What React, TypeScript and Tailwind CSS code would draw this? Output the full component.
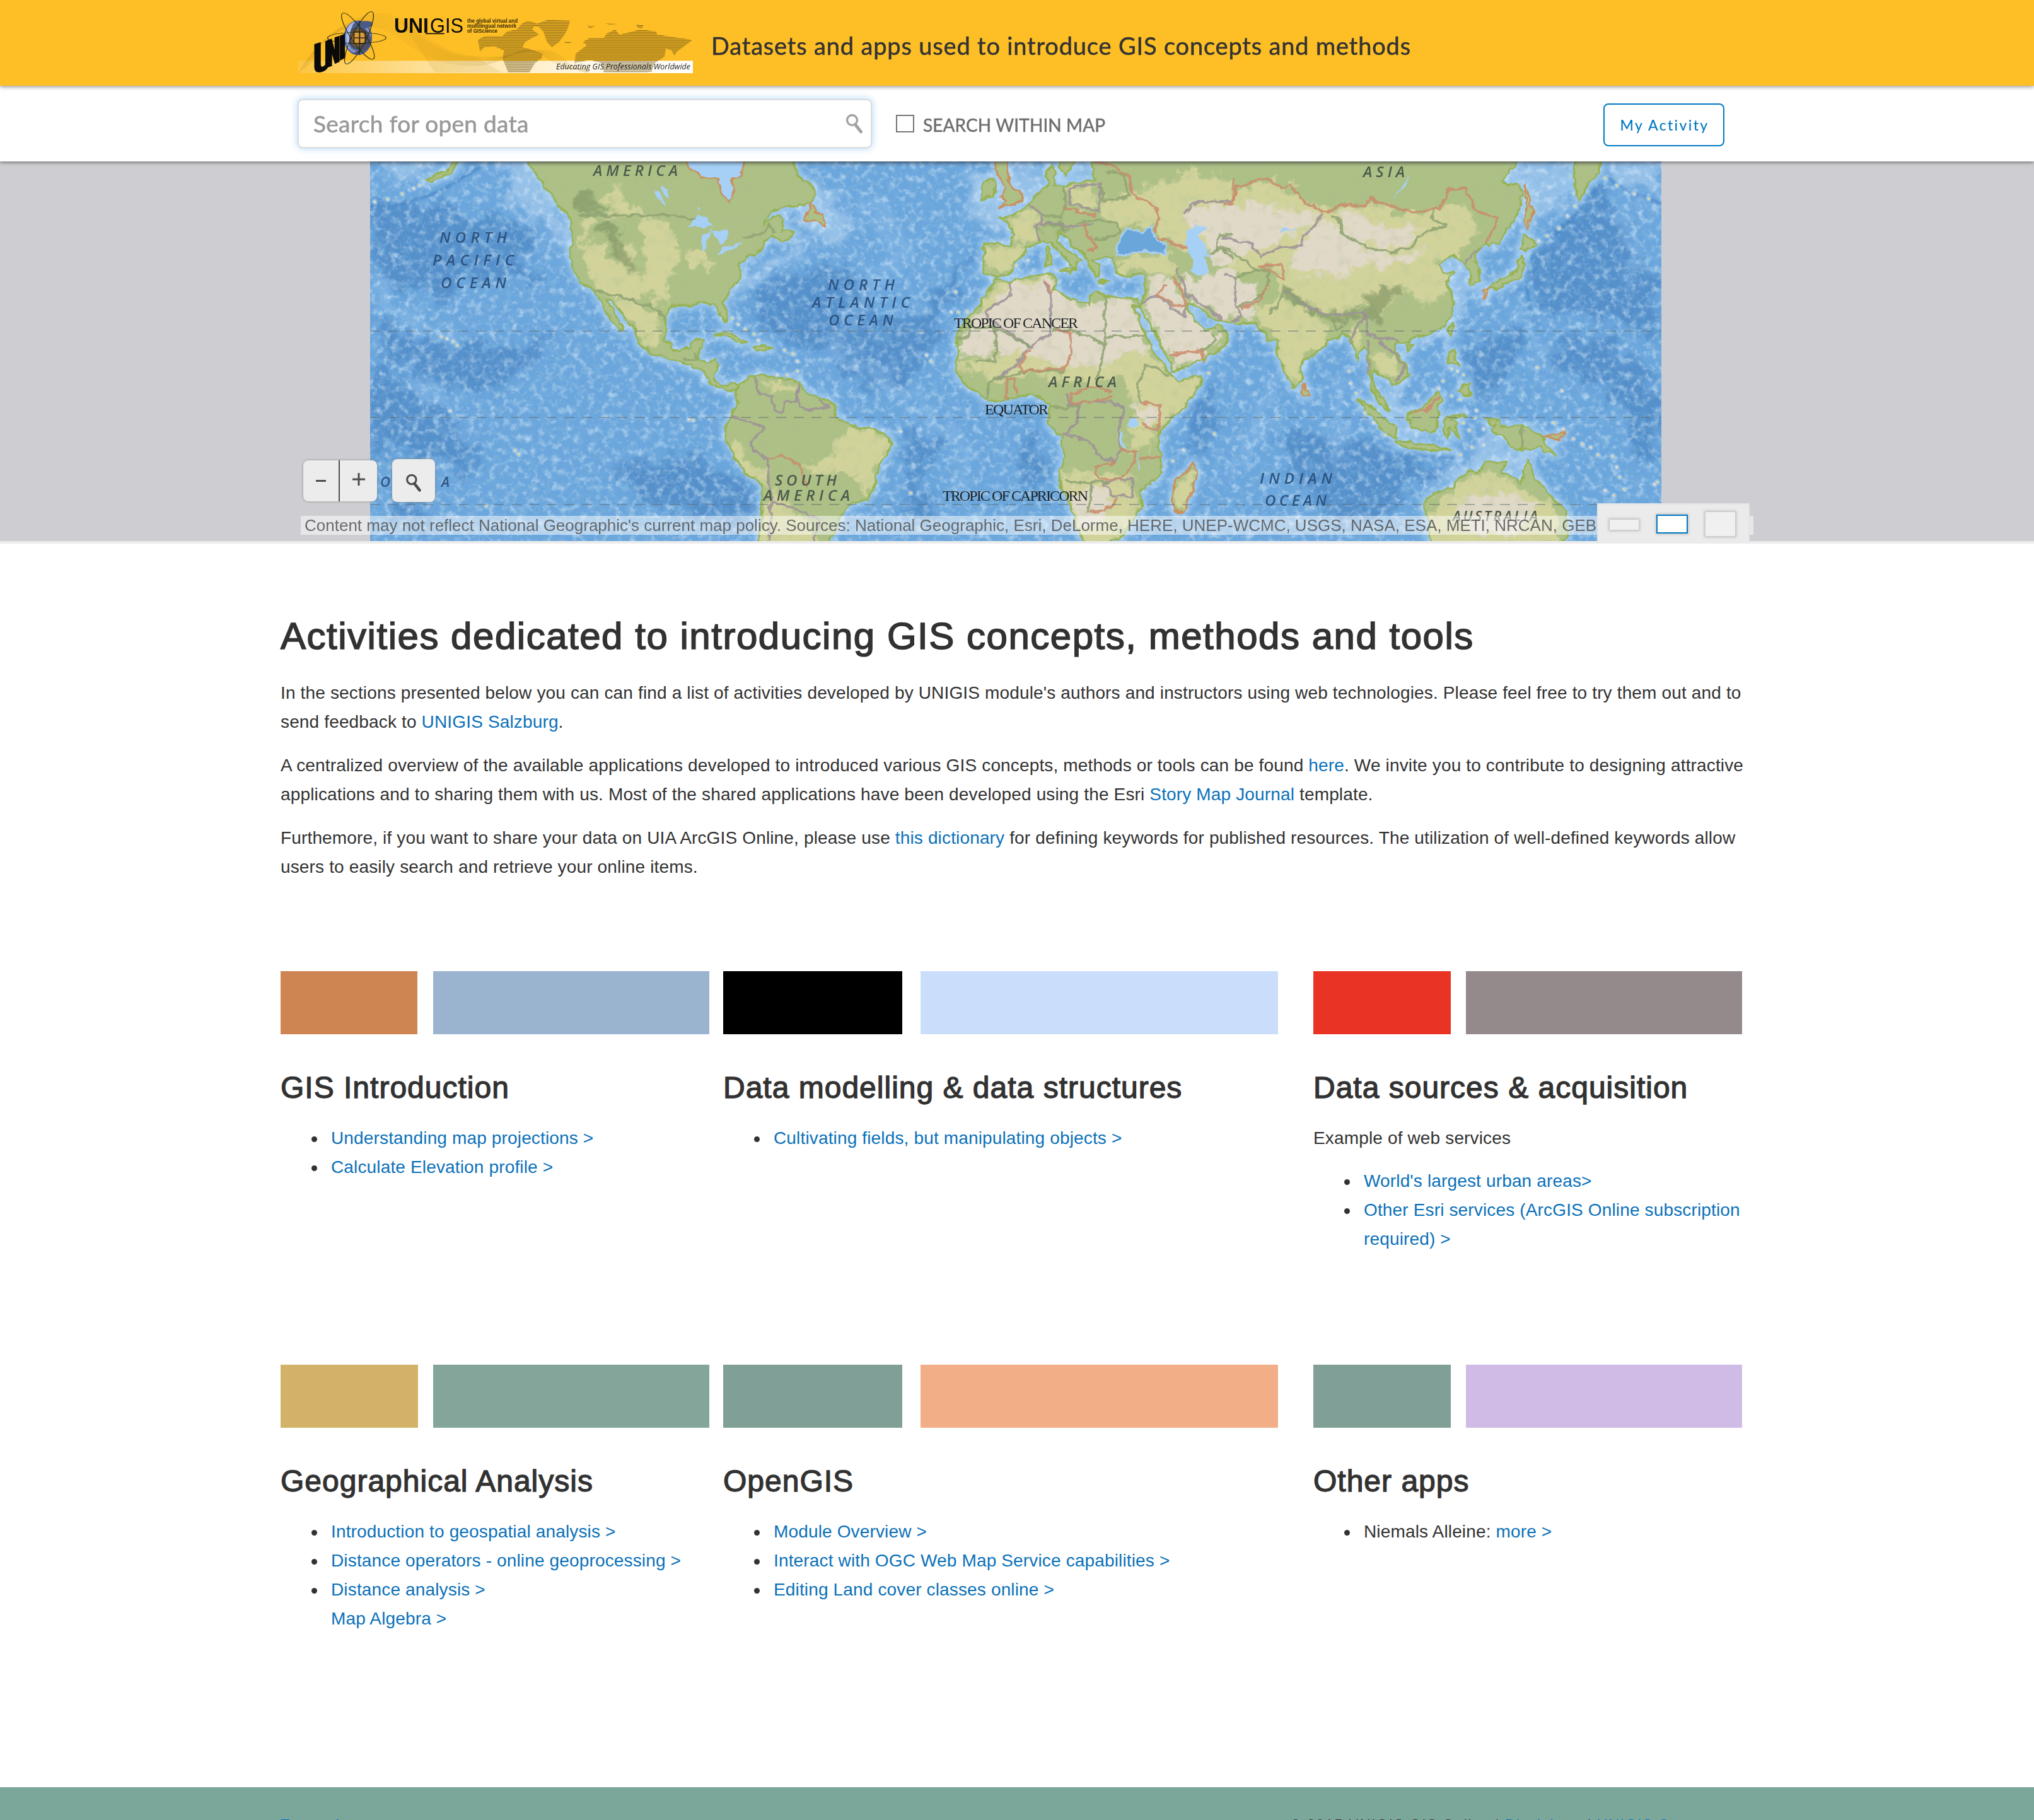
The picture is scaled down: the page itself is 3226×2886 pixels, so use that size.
import React from "react";

/* ---------- map geometry ---------- */

const W = 0;
const M = 1481;
const E = 3005;
const ORIGIN_X = 59;
const ORIGIN_Y = 18;
const KX = 0.4592;
const KY = 0.3903;

type Part = [number, string];

function points(parts: Part[]): string {
  return parts
    .map(([dx, s]) =>
      s
        .trim()
        .split(/\s+/)
        .map((p) => {
          const [x, y] = p.split(",").map(Number);
          return `${((x + dx - ORIGIN_X) * KX).toFixed(1)},${((y - ORIGIN_Y) * KY).toFixed(1)}`;
        })
        .join(" "),
    )
    .join(" ");
}

const LAND: Part[][] = [
  // North and Central America
  [
    [W, "600,0 605,18 620,50 650,100 680,150 710,200 750,245 758,300 750,400 765,460 795,520 835,540 860,600 885,650 920,705 935,705 920,660 900,620 872,575 890,575 920,620 950,670 975,705 985,760 1040,800 1105,825 1150,840 1180,860 1212,872 1225,910 1265,940 1300,948 1330,940 1330,925 1310,920 1275,932 1250,900 1255,850 1250,828 1200,830 1190,815 1200,780 1214,742 1180,740 1165,775 1110,785 1080,745 1080,650 1090,615 1130,598 1170,605 1200,590 1250,598 1262,620 1275,660 1293,675 1290,640 1277,590 1300,545 1340,490 1335,440 1370,400 1410,380 1420,345 1450,320 1470,330 1480,345 1525,310 1500,295 1480,300 1487,260 1480,235 1450,245 1415,275 1445,220 1480,205"],
    [M, "0,205 60,200 112,175 116,130 60,80 45,40 30,0"],
  ],
  // Newfoundland
  [[M, "105,180 90,225 75,255 120,262 150,275 145,235 115,220"]],
  // South America
  [
    [W, "1325,945 1335,920 1360,900 1410,880 1440,895 1500,900 1540,915"],
    [M, "60,925 110,975 150,980 180,1010 190,1060 215,1075 260,1095 330,1110 375,1140 378,1180 330,1260 322,1330 295,1390 240,1410 205,1450 180,1530 150,1580"],
    [W, "1400,1580 1412,1400 1412,1330 1360,1290 1320,1220 1290,1150 1285,1100 1300,1060 1330,1000"],
  ],
  // Africa
  [[M, "735,490 785,512 830,490 905,480 942,472 945,500 938,540 970,560 1030,590 1060,602 1065,560 1085,550 1110,562 1160,575 1210,572 1235,580 1237,612 1212,600 1250,700 1280,790 1310,830 1350,890 1372,908 1447,885 1440,940 1390,1010 1330,1080 1297,1130 1305,1200 1312,1280 1295,1310 1240,1350 1248,1420 1215,1460 1210,1490 1170,1550 1100,1580 1050,1580 1020,1500 990,1400 955,1310 975,1220 965,1140 920,1080 932,1010 905,985 868,966 820,970 780,985 710,990 675,955 630,920 605,880 600,840 612,800 600,740 640,650 690,600 705,550 735,515"]],
  // Eurasia
  [
    [M, "700,350 790,358 797,320 780,265 755,245 800,238 840,205 875,160 890,130 922,120 912,60 935,30 945,60 940,110 980,115 1050,100 1085,92 1070,40 1085,0"],
    [E, "1020,0 1000,45 985,70 960,98 1000,115 1015,110 1032,135 1030,190 1010,250 950,350 920,362 905,350 870,400 885,460 887,505 855,522 850,460 835,430 800,410 790,400 760,430 745,440 760,465 802,468 765,505 785,540 797,600 795,630 765,695 700,722 650,742 640,755 600,750 590,790 635,845 637,890 590,932 575,905 545,885 525,860 515,900 530,955 560,985 572,1035 540,1005 520,950 508,920 512,860 495,790 482,770 465,825 455,790 440,740 415,715 395,735 360,745 335,780 275,830 270,900 245,940 215,880 190,800 185,740 160,748 130,700 105,675 40,675 0,665"],
    [M, "1470,640 1420,600 1402,590 1400,612 1440,680 1460,705 1495,700 1505,680 1545,720 1530,770 1460,820 1350,872 1338,830 1290,720 1240,620 1252,560 1255,485 1215,475 1180,487 1150,462 1140,410 1115,405 1100,412 1070,420 1100,445 1090,485 1065,450 1048,395 1010,365 985,330 960,308 948,340 1000,395 1038,418 1015,425 1012,455 985,420 955,385 935,350 910,345 880,352 845,360 842,388 805,425 802,465 745,487 725,475 695,470"],
  ],
  // British Isles, Sweden
  [[M, "735,0 780,0 775,60 795,115 825,150 828,180 750,208 775,180 755,160 775,125 750,80"]],
  [[M, "690,110 725,88 737,105 728,160 690,178"]],
  [[M, "960,0 1020,0 1000,50 978,82 965,55"]],
  // Mediterranean islands
  [[M, "915,365 925,365 928,435 913,440 915,400"]],
  [[M, "965,457 1005,455 998,475"]],
  [[M, "1100,500 1135,505 1100,510"]],
  // Madagascar
  [[M, "1420,1240 1434,1290 1405,1390 1388,1445 1358,1442 1350,1400 1358,1310 1400,1280"]],
  // Sri Lanka
  [[E, "278,915 298,968 280,972"]],
  // Indonesia and Philippines
  [[E, "465,978 520,1020 560,1065 598,1095 600,1142 560,1120 500,1040"]],
  [[E, "595,1155 680,1162 790,1192 700,1190 600,1172"]],
  [[E, "637,1040 690,1020 740,958 757,985 742,1010 752,1050 725,1118 650,1100"]],
  [[E, "762,1080 780,1050 835,1045 835,1053 790,1060 812,1080 800,1095 815,1140 785,1100 775,1145 765,1130"]],
  [[E, "780,790 802,785 800,825 815,850 775,838"]],
  [[E, "815,945 848,915 852,968 835,975"]],
  [[E, "788,680 796,695 785,727 775,705"]],
  [[E, "630,765 658,762 642,790"]],
  // Japan, Sakhalin, Kamchatka
  [[E, "1040,318 1085,350 1050,378 1022,375 1035,350"]],
  [[E, "1030,398 1042,440 1025,490 985,515 940,535 915,540 935,515 975,490 1010,468 1018,420"]],
  [[E, "895,540 918,535 905,577"]],
  [[E, "1045,110 1055,160 1070,225 1055,292 1045,270 1050,200 1040,150"]],
  [[E, "1222,0 1305,0 1300,60 1250,130 1232,182 1218,140 1213,60"]],
  // New Guinea and New Britain
  [[E, "905,1065 945,1070 955,1095 1030,1088 1090,1125 1150,1212 1110,1195 1095,1170 1060,1192 1000,1182 985,1150 930,1115 940,1090"]],
  [[E, "1108,1142 1180,1118 1160,1150"]],
  // Australia
  [[E, "715,1580 715,1500 693,1410 705,1380 790,1345 810,1310 850,1270 880,1285 905,1240 980,1242 963,1275 1030,1328 1040,1280 1050,1222 1080,1300 1125,1370 1185,1440 1187,1530 1170,1580"]],
  // Cuba, Hispaniola
  [[W, "1250,722 1290,712 1360,752 1340,758 1290,730"]],
  [[W, "1380,770 1405,762 1445,778 1400,790"]],
  // Aleutians
  [[W, "250,95 330,50 350,10 370,10 345,60 270,100"]],
];

const LAKES: Part[][] = [
  [[W, "1140,0 1165,45 1200,80 1265,90 1270,140 1300,185 1320,150 1308,90 1345,70 1350,0"]],
  [[W, "1152,282 1190,240 1225,245 1242,282 1190,285"]],
  [[W, "1205,320 1238,295 1225,340 1215,388 1200,370"]],
  [[W, "1240,300 1290,300 1300,330 1265,365 1260,330"]],
  [[W, "1255,388 1290,365 1345,342 1320,365 1280,390"]],
  [[W, "1062,118 1085,130 1090,170 1070,150"]],
  [[W, "1040,140 1050,135 1080,200 1065,195"]],
  [[W, "1185,205 1198,208 1192,225"]],
  [[M, "1155,400 1165,345 1190,290 1230,300 1240,310 1282,285 1285,320 1325,360 1322,395 1250,382 1200,397"]],
  [[M, "1395,300 1440,275 1468,285 1440,320 1460,370 1482,400 1462,405 1478,475 1430,482 1412,460 1420,420 1395,360"]],
  [[M, "1200,1060 1230,1060 1222,1095 1198,1085"]],
  [[M, "1170,1105 1190,1190 1180,1185 1168,1140"]],
  [[M, "1225,1200 1240,1270 1232,1270"]],
  [[E, "640,80 635,115 580,178 618,125"]],
  [[E, "195,310 205,292 260,290 225,300"]],
];

// Semi-arid and arid regions laid over the green land
const STEPPE: Part[][] = [
  [[W, "880,130 930,130 960,200 1005,210 1010,240 880,225"]],
  [[W, "790,255 830,260 810,310 800,360 860,350 900,430 930,350 975,360 960,440 1010,500 990,240 1060,250 1115,330 1130,410 1090,500 1080,620 1060,580 1020,560 960,570 840,550 830,470 795,400"]],
  [[W, "890,575 950,580 1000,610 1050,650 1060,740 1050,780 1010,740 970,680"]],
  [[W, "1140,380 1200,390 1250,420 1230,460 1180,440"]],
  [[W, "1300,1140 1340,1200 1380,1260 1425,1290 1420,1330 1350,1280 1300,1190"]],
  [[W, "1420,925 1500,915 1530,950 1450,960"]],
  [[M, "190,1140 230,1110 300,1110 378,1140 378,1190 330,1260 310,1350 280,1370 250,1290 60,1270 160,1230 190,1190"]],
  [[M, "-70,1400 -30,1340 20,1400 40,1450 100,1480 120,1580 -80,1580"]],
  [[M, "600,840 650,830 850,790 1000,830 1200,820 1260,780 1330,860 1380,905 1440,890 1430,960 1330,1080 1290,1110 1210,1090 1240,1010 1170,900 1100,920 980,900 850,880 720,910 620,850"]],
  [[M, "960,1270 1050,1290 1200,1290 1230,1400 1210,1500 1100,1580 1030,1580"]],
  [[M, "1200,1100 1280,1110 1290,1180 1200,1190"]],
  [[M, "1360,1310 1430,1260 1400,1440 1355,1440"]],
  [[M, "700,355 840,370 800,465 700,470"]],
  [[M, "790,240 880,210 890,340 800,350"]],
  [[M, "1000,120 1090,110 1095,215 1010,200"]],
  [[M, "1110,190 1280,120 1400,60 1560,90 1560,400 1390,370 1310,330 1290,270 1180,280 1110,240"]],
  [[M, "1150,410 1240,395 1350,400 1350,470 1150,470"]],
  [[M, "690,590 745,500 945,480 930,560 700,640"]],
  [[E, "0,180 60,130 150,100 230,120 290,190 400,210 500,190 620,230 700,220 780,180 860,220 870,320 800,410 740,430 790,520 700,600 620,520 560,640 480,600 400,640 200,560 180,440 0,480"]],
  [[E, "110,640 180,560 230,590 360,690 350,760 270,820 265,900 240,930 200,800 190,740 130,680"]],
  [[E, "450,660 480,720 470,800 440,740"]],
  [[E, "520,790 600,830 620,880 580,900 520,860"]],
  [[E, "715,1420 780,1360 850,1300 940,1290 1050,1350 1110,1400 1160,1450 1170,1580 700,1580"]],
];

const DESERT: Part[][] = [
  [[M, "605,810 640,690 700,620 790,520 940,500 1060,610 1120,570 1215,590 1280,760 1240,800 1080,850 960,850 850,800 620,800"]],
  [[M, "1260,500 1340,480 1400,590 1440,680 1500,700 1530,730 1440,820 1350,850 1250,630"]],
  [[M, "1370,470 1420,490 1560,460 1560,660 1420,600"]],
  [[M, "1390,220 1470,190 1560,200 1560,440 1480,440 1450,300 1400,280"]],
  [[M, "1210,1000 1250,1010 1300,1020 1290,1090 1240,1080"]],
  [[M, "990,1390 1060,1330 1140,1350 1110,1470 1040,1520"]],
  [[E, "0,220 120,180 200,220 320,220 300,270 200,350 100,380 0,440"]],
  [[E, "390,220 470,230 560,290 700,290 600,370 480,350 420,310"]],
  [[E, "300,300 380,260 480,370 560,390 700,380 620,430 500,440 400,480 250,460 220,410"]],
  [[E, "0,470 40,500 100,500 130,560 110,640 40,660 0,650"]],
  [[E, "800,1400 860,1360 1000,1370 1080,1410 1060,1500 960,1540 820,1500"]],
];

// Wooded highlands printed in a darker tint
const HIGHLAND: Part[][] = [
  [[E, "210,520 250,560 300,610 380,640 470,620 490,650 400,660 300,640 230,590"]],
  [[E, "480,590 560,520 610,540 570,600 540,680 500,660"]],
  [[W, "770,160 830,150 870,220 800,240"]],
  [[W, "840,260 900,250 960,440 990,480 940,460"]],
  [[M, "890,265 960,260 1000,290 900,300"]],
];

// Borders, grouped by the tint they are printed in
const BORDERS: { stroke: string; lines: Part[][] }[] = [
  {
    stroke: "#9c9098",
    lines: [
      [[W, "1385,890 1400,960 1450,970 1455,1030 1480,1040 1490,1000 1530,990 1540,920"]],
      [[W, "1305,1050 1360,1070 1420,1100 1410,1120 1375,1150 1385,1190 1435,1230 1435,1290 1445,1380 1440,1560"]],
      [[M, "55,930 60,1020 90,1030 160,1010 130,985"]],
      [[M, "-30,1400 90,1450 130,1480 110,1560"]],
      [[M, "790,512 790,560 705,625 710,650 855,770 925,720 930,560 905,500"]],
      [[M, "745,905 800,850 850,780"]],
      [[M, "985,960 990,1010 1030,1000 1020,1080 970,1130 1020,1140 1080,1170 1085,1210 1150,1240 1170,1190 1165,1100 1185,1020 1140,995 1060,990"]],
      [[M, "990,130 1000,190 1095,220 1100,110 1040,115 990,130"]],
      [[M, "890,350 880,280 900,235 850,190"]],
      [[M, "890,270 950,270 1010,285 1080,270"]],
      [[M, "1240,600 1290,560 1390,650 1400,600"]],
      [[M, "1390,230 1420,190 1480,175 1560,180"]],
      [[M, "1365,450 1400,560 1480,620 1524,660"]],
      [[E, "345,230 310,290 280,320 270,365 200,360 160,390 130,410 100,350 40,340 0,320"]],
      [[E, "215,540 280,600 350,640 440,640 490,630 500,720 540,740 610,740"]],
      [[E, "0,470 40,490 45,600 60,650 30,670"]],
      [[E, "500,640 460,690 440,760"]],
      [[E, "500,740 500,860 515,900"]],
      [[E, "540,750 580,790 630,850 600,910"]],
      [[E, "835,430 860,390 895,370"]],
      [[M, "1110,1330 1160,1310 1215,1310 1210,1380 1150,1380 1110,1330"]],
    ],
  },
  {
    stroke: "#8fa272",
    lines: [
      [[W, "775,237 1110,237 1180,255"]],
      [[W, "1345,325 1410,315 1440,270 1455,310"]],
      [[W, "835,540 950,575 1000,605 1030,600 1080,665"]],
      [[W, "1140,820 1190,830 1180,790"]],
      [[M, "600,740 640,740 650,690 735,690 740,828 665,830"]],
      [[M, "735,690 855,770"]],
      [[M, "1115,565 1118,760 1000,705 935,705"]],
      [[M, "1118,730 1265,730"]],
      [[M, "1115,760 1100,850 1090,900"]],
      [[M, "710,990 715,910 850,870 980,870"]],
      [[M, "1240,1000 1230,920 1260,840 1340,890"]],
      [[M, "930,1010 985,1020 1030,1010"]],
      [[M, "975,1310 1060,1325 1130,1320"]],
      [[M, "1070,1320 1060,1440"]],
      [[M, "1105,120 1110,180 1200,160 1180,70 1120,60"]],
      [[M, "900,240 960,240 985,190 970,120"]],
      [[M, "1020,270 1080,250 1160,270 1170,310 1080,340"]],
      [[M, "1500,380 1510,310 1560,320"]],
      [[M, "1480,390 1520,370 1560,420"]],
      [[M, "1490,720 1500,740 1450,785"]],
      [[E, "375,240 410,270 410,310 470,350 500,370 590,385 660,360 670,320 770,280 720,240 740,200"]],
      [[E, "40,490 130,460 160,470 150,540 110,580 50,605"]],
      [[E, "160,640 200,580 215,530 270,590"]],
      [[E, "380,650 390,710 410,680"]],
      [[E, "0,370 60,410 120,460"]],
      [[E, "1030,1090 1035,1190"]],
    ],
  },
  {
    stroke: "#c98b6c",
    lines: [
      [[M, "1080,18 1150,40 1200,80 1210,150 1300,210 1300,280 1280,320 1400,370"]],
      [[M, "1560,90 1560,180"]],
      [[E, "0,190 35,190 45,120 150,85 200,120 235,110 280,185 360,225 410,195 490,200 510,165 580,200 650,225 750,210 780,130 840,130 870,215 950,250 920,330 905,350"]],
      [[M, "860,780 815,845 840,870 975,860 1000,800 995,715 950,705"]],
      [[M, "780,985 775,905 805,900 810,965"]],
      [[M, "1140,960 1090,930 1000,960 995,1000 1060,995 1140,975"]],
      [[M, "1240,1000 1310,1010 1300,1110 1240,1080"]],
      [[M, "1165,1190 1225,1200 1205,1270 1180,1290 1160,1310 1095,1310 1080,1260 1150,1240"]],
      [[M, "1240,1225 1305,1220"]],
      [[M, "1065,1440 1110,1440 1160,1390"]],
      [[M, "910,500 935,555"]],
      [[M, "1350,480 1390,560 1395,605 1350,600 1290,555 1330,520"]],
      [[M, "1340,800 1450,785 1460,830"]],
      [[M, "1040,270 1085,370 1060,380"]],
      [[M, "970,205 1060,235 1080,230"]],
      [[E, "125,440 200,440 215,500 175,470 125,440"]],
      [[E, "60,610 120,590 160,520"]],
      [[E, "650,1035 700,1030 745,975"]],
      [[W, "1435,1230 1480,1210 1540,1250 1570,1340"]],
    ],
  },
];

const COAST_WARM = new Set([1, 5, 11, 12, 23, 24, 27]);

const DEEP: Part[][] = [
  [[W, "60,200 260,180 400,250 620,270 600,400 640,520 420,480 300,600 60,460"]],
  [[W, "60,640 160,700 330,780 700,740 600,840 480,960 300,920 120,830"]],
  [[W, "60,860 180,900 330,1060 440,1200 400,1300 200,1200 60,1200"]],
  [[W, "110,1440 180,1390 300,1450 280,1500 120,1500"]],
  [[W, "900,1240 1180,1220 1350,1300 1400,1420 1300,1500 1000,1420"]],
  [[W, "1380,560 1480,480 1700,440 1800,640 1740,790 1560,780 1380,680"]],
  [[M, "200,880 300,700 480,640 520,560 640,400 680,360 560,640 460,880 360,960"]],
  [[M, "420,1120 560,1140 480,1300 560,1500 420,1480"]],
  [[M, "800,1180 870,1100 910,1300 850,1380"]],
  [[M, "1500,900 1400,1060 1430,1240 1500,1100"]],
  [[E, "200,1100 420,1140 600,1200 770,1240 740,1310 660,1330 560,1470 400,1500 240,1300"]],
  [[E, "1290,120 1420,300 1400,420 1510,480 1500,740 1300,640 1120,640 1050,520 1080,380"]],
  [[E, "820,760 1040,700 1000,900 900,1000 840,860"]],
  [[E, "1100,820 1300,700 1500,900 1500,1240 1380,1180 1420,1040 1240,900"]],
];

const SHALLOW: Part[][] = [
  [[W, "60,0 310,0 230,90 150,80"]],
  [[W, "500,0 610,0 750,250 740,420 660,280 560,180"]],
  [[M, "110,60 180,180 270,250 190,360 60,320"]],
  [[M, "640,80 700,60 860,0 900,110 830,220 790,330 640,220"]],
  [[M, "910,0 1080,0 1070,100 920,110"]],
  [[E, "1000,0 1215,0 1225,160 1140,230 1080,260 1000,120"]],
  [[E, "1310,0 1515,0 1515,180 1420,150 1330,80"]],
  [[E, "740,440 840,430 860,590 760,740 640,760 790,600"]],
  [[E, "530,870 640,930 640,1040 720,1140 600,1140 560,1000"]],
  [[E, "940,1110 1060,1190 1050,1310 960,1270 700,1350 820,1230"]],
  [[W, "1290,600 1360,460 1560,340 1560,380 1340,560"]],
];

const RIDGES: Part[][] = [
  [[W, "60,500 160,640 360,760"]],
  [[W, "180,880 330,1030 370,1120"]],
  [[M, "300,180 420,380 300,520 180,780 330,880 520,1060 640,1200 620,1400"]],
  [[E, "180,900 120,1100 40,1300"]],
  [[E, "1040,620 1100,780 1090,860"]],
  [[E, "1380,200 1400,420 1420,520"]],
  [[E, "400,900 395,1250"]],
];

const TRENCHES: Part[][] = [
  [[W, "60,200 160,195 300,140 440,40"]],
  [[E, "1320,80 1400,140 1515,190"]],
  [[E, "1300,110 1200,260 1080,380 1045,480 1060,620"]],
  [[E, "480,1040 570,1150 700,1215 800,1220"]],
  [[W, "1285,1160 1330,1270 1400,1350"]],
];

const ISLETS: Part[] = [
  [W, "75,182 120,172 170,150 210,128 230,115 305,730 325,738 345,750 360,765 335,1032 560,1192 572,1208 1160,1065 1175,1070 1310,655 1330,680 1355,700 1385,720 1400,745 1490,785 1520,800 1535,830 1535,870 1500,885 1465,885 460,1418"],
  [M, "585,630 610,630 640,628 500,805 515,830 810,440 850,420 600,548 1350,1235 1388,1190 1495,1125 1475,878 410,1115 445,1365"],
  [E, "1090,340 1120,320 1160,290 1190,240 1215,200 790,860 810,870 830,885 760,910 745,940 790,970 820,985 875,1030 870,1060 850,1110 900,1105 830,1080 860,1180 900,1170 820,1210 1140,1080 1175,1105 1210,1145 1240,1165 1270,1180 1295,1210 1345,1215 1360,1260 1370,1300 1385,1350 1320,1355 1350,1375 1500,1320 1490,1330 1320,85 1360,115 1420,150 1470,170 435,870 440,920 460,960 490,1040 520,1080 560,1130 1085,855 1170,950"],
];

type Label = { text: string; x: number; y: number; w: number; size?: number; tone?: "land" | "sea" | "line" };

const LABELS: Label[] = [
  { text: "AMERICA", x: 354, y: 23, w: 134, tone: "land" },
  { text: "ASIA", x: 1575, y: 25, w: 66, tone: "land" },
  { text: "NORTH", x: 110, y: 129, w: 107 },
  { text: "PACIFIC", x: 99, y: 165, w: 129 },
  { text: "OCEAN", x: 112, y: 201, w: 104 },
  { text: "NORTH", x: 726, y: 204, w: 106 },
  { text: "ATLANTIC", x: 701, y: 232, w: 155 },
  { text: "OCEAN", x: 727, y: 260, w: 103 },
  { text: "AFRICA", x: 1076, y: 358, w: 108, tone: "land" },
  { text: "SOUTH", x: 642, y: 514, w: 98, tone: "land" },
  { text: "AMERICA", x: 624, y: 538, w: 137, tone: "land" },
  { text: "INDIAN", x: 1411, y: 511, w: 115 },
  { text: "OCEAN", x: 1419, y: 546, w: 98 },
  { text: "AUSTRALIA", x: 1717, y: 570, w: 135, size: 22, tone: "land" },
  { text: "O", x: 16, y: 516, w: 12, size: 22 },
  { text: "A", x: 113, y: 516, w: 12, size: 22 },
  { text: "TROPIC OF CANCER", x: 926, y: 264, w: 197, tone: "line" },
  { text: "EQUATOR", x: 975, y: 401, w: 101, tone: "line" },
  { text: "TROPIC OF CAPRICORN", x: 908, y: 538, w: 231, tone: "line" },
];

function WorldMap() {
  return (
    <svg width="2048" height="602" viewBox="0 0 2048 602" className="block">
      <defs>
        <filter id="rough" x="0" y="0" width="100%" height="100%" filterUnits="objectBoundingBox">
          <feTurbulence type="fractalNoise" baseFrequency="0.07" numOctaves="3" seed="4" result="n" />
          <feDisplacementMap in="SourceGraphic" in2="n" scale="11" xChannelSelector="R" yChannelSelector="G" result="d" />
          <feGaussianBlur in="d" stdDeviation="0.6" />
        </filter>
        <filter id="patch" x="-10%" y="-10%" width="120%" height="120%">
          <feGaussianBlur stdDeviation="7" result="b" />
          <feTurbulence type="fractalNoise" baseFrequency="0.03" numOctaves="4" seed="9" result="n" />
          <feDisplacementMap in="b" in2="n" scale="60" xChannelSelector="R" yChannelSelector="G" />
        </filter>
        <filter id="biome" x="-10%" y="-10%" width="120%" height="120%">
          <feGaussianBlur stdDeviation="2" result="b" />
          <feTurbulence type="fractalNoise" baseFrequency="0.05" numOctaves="4" seed="2" result="n" />
          <feDisplacementMap in="b" in2="n" scale="36" xChannelSelector="R" yChannelSelector="G" />
        </filter>
        <filter id="soft" x="-5%" y="-5%" width="110%" height="110%">
          <feGaussianBlur stdDeviation="4" />
        </filter>
        <filter id="trench" x="-5%" y="-5%" width="110%" height="110%">
          <feGaussianBlur stdDeviation="1.5" />
        </filter>
        <filter id="grainLight" x="0" y="0" width="100%" height="100%">
          <feTurbulence type="fractalNoise" baseFrequency="0.09" numOctaves="5" seed="7" />
          <feColorMatrix values="0 0 0 0 0.7  0 0 0 0 0.85  0 0 0 0 0.97  2.6 0 0 0 -1.25" />
        </filter>
        <filter id="grainDark" x="0" y="0" width="100%" height="100%">
          <feTurbulence type="fractalNoise" baseFrequency="0.08" numOctaves="5" seed="21" />
          <feColorMatrix values="0 0 0 0 0.24  0 0 0 0 0.48  0 0 0 0 0.72  0 2.4 0 0 -1.2" />
        </filter>
        <filter id="grainLand" x="0" y="0" width="100%" height="100%">
          <feTurbulence type="fractalNoise" baseFrequency="0.06" numOctaves="5" seed="13" />
          <feColorMatrix values="0 0 0 0 0.44  0 0 0 0 0.52  0 0 0 0 0.3  0 2.4 0 0 -1.25" />
        </filter>
        <clipPath id="land">
          {LAND.map((p, i) => (
            <polygon key={i} points={points(p)} />
          ))}
        </clipPath>
        <linearGradient id="topShade" x1="0" y1="0" x2="0" y2="1">
          <stop offset="0" stopColor="#4b5560" stopOpacity="0.3" />
          <stop offset="1" stopColor="#4b5560" stopOpacity="0" />
        </linearGradient>
      </defs>

      <rect width="2048" height="602" fill="#6ba6dc" />
      <g filter="url(#patch)">
        {DEEP.map((p, i) => (
          <polygon key={i} points={points(p)} fill="#5490cb" />
        ))}
        {SHALLOW.map((p, i) => (
          <polygon key={i} points={points(p)} fill="#95c0e8" />
        ))}
      </g>
      <g filter="url(#patch)" fill="none" stroke="#96c3ed" strokeWidth="20" opacity="0.4">
        {RIDGES.map((p, i) => (
          <polyline key={i} points={points(p)} />
        ))}
      </g>
      <g filter="url(#trench)" fill="none" stroke="#3f7fc0" strokeWidth="5" strokeLinejoin="round" opacity="0.6">
        {TRENCHES.map((p, i) => (
          <polyline key={i} points={points(p)} />
        ))}
      </g>
      <g filter="url(#soft)">
        {LAND.map((p, i) => (
          <polygon key={i} points={points(p)} fill="none" stroke="#a9cff2" strokeWidth="15" strokeLinejoin="round" opacity="0.8" />
        ))}
      </g>
      <rect width="2048" height="602" filter="url(#grainLight)" opacity="0.6" />
      <rect width="2048" height="602" filter="url(#grainDark)" opacity="0.55" />

      <g filter="url(#rough)">
        <rect width="2048" height="602" fill="none" />
        {LAND.map((p, i) => (
          <polygon key={i} points={points(p)} fill="#adc086" />
        ))}
        <g clipPath="url(#land)">
          <g filter="url(#biome)">
            {STEPPE.map((p, i) => (
              <polygon key={i} points={points(p)} fill="#d1d39b" />
            ))}
            {DESERT.map((p, i) => (
              <polygon key={i} points={points(p)} fill="#e0d9c8" />
            ))}
            {HIGHLAND.map((p, i) => (
              <polygon key={i} points={points(p)} fill="#869a68" opacity="0.75" />
            ))}
          </g>
          <rect width="2048" height="602" filter="url(#grainLand)" opacity="0.35" />
        </g>
        {BORDERS.map((b) => (
          <g key={b.stroke} fill="none" stroke={b.stroke} strokeLinejoin="round">
            {b.lines.map((p, i) => (
              <polyline key={i} points={points(p)} strokeWidth="4" opacity="0.85" />
            ))}
          </g>
        ))}
        {LAND.map((p, i) => (
          <polygon
            key={i}
            points={points(p)}
            fill="none"
            stroke={COAST_WARM.has(i) ? "#c8925f" : "#98b355"}
            strokeWidth="3"
            strokeLinejoin="round"
          />
        ))}
        {LAKES.map((p, i) => (
          <polygon key={i} points={points(p)} fill={i === 8 ? "#6ba6da" : "#a6d0f5"} stroke={i === 0 ? "#c8925f" : i === 8 ? "#a8cdf0" : "none"} strokeWidth="3" />
        ))}
      </g>

      {ISLETS.map(([dx, s], k) =>
        s.split(" ").map((pt, i) => {
          const [x, y] = points([[dx, pt]]).split(",").map(Number);
          return (
            <g key={`${k}-${i}`}>
              <circle cx={x} cy={y} r="4.5" fill="#a9cff2" opacity="0.6" />
              <ellipse cx={x} cy={y} rx="2.6" ry="1.8" fill={i % 3 ? "#dcd8a8" : "#e8dcc8"} transform={`rotate(35 ${x} ${y})`} />
            </g>
          );
        }),
      )}

      {[269, 406, 544].map((y) => (
        <line key={y} x1="0" x2="2048" y1={y} y2={y} stroke="#5d6b70" strokeWidth="1.6" strokeDasharray="16 12" opacity="0.6" />
      ))}

      {LABELS.map((l) => (
        <text
          key={l.text + l.x}
          x={l.x}
          y={l.y}
          textLength={l.text.length > 1 ? l.w : undefined}
          fontSize={l.size ?? 24}
          className={
            l.tone === "line"
              ? "fill-[#1d2224] font-['Liberation_Serif',serif]"
              : l.tone === "land"
                ? "fill-[#4c5a4c] font-['Open_Sans',sans-serif] font-semibold italic"
                : "fill-[#2c5482] font-['Open_Sans',sans-serif] font-semibold italic"
          }
        >
          {l.text}
        </text>
      ))}
      <rect width="2048" height="8" fill="url(#topShade)" />
    </svg>
  );
}

/* ---------- header logo ---------- */

const LOGO_LAND = [
  "712,190 735,172 800,172 815,150 850,140 870,110 890,100 920,110 905,140 930,165 905,180 880,200 870,225 840,215 900,235 940,255 940,275 915,300 895,345 820,345 800,280 805,240 770,220 735,225 720,245",
  "905,120 960,95 1040,98 1030,140 1020,165 1000,200 975,225 958,200 945,150 930,130",
  "1055,300 1060,255 1075,240 1100,215 1085,200 1110,180 1160,180 1170,160 1200,140 1215,165 1290,140 1345,150 1350,165 1475,190 1450,215 1420,245 1410,265 1400,240 1380,230 1375,270 1340,300 1330,340 1310,345 1160,345 1150,300 1110,285",
  "1020,198 1045,198 1040,206 1022,206",
  "1165,112 1210,114 1180,118",
  "1275,115 1300,120 1295,136 1278,130",
  "1100,122 1130,124 1110,136",
];

function Logo() {
  return (
    <svg width="628" height="100" viewBox="32 17 628 100" className="block shrink-0 overflow-visible">
      <defs>
        <pattern id="stripes" width="10" height="8" patternUnits="userSpaceOnUse">
          <rect width="10" height="4" fill="#6d5516" opacity="0.8" />
        </pattern>
        <linearGradient id="band" x1="0" x2="1">
          <stop offset="0" stopColor="#fff" stopOpacity="0.12" />
          <stop offset="0.3" stopColor="#fff" stopOpacity="0.5" />
          <stop offset="0.75" stopColor="#fff" stopOpacity="0.9" />
          <stop offset="1" stopColor="#fff" stopOpacity="1" />
        </linearGradient>
        <radialGradient id="globe">
          <stop offset="0" stopColor="#f0b345" />
          <stop offset="0.4" stopColor="#94642a" />
          <stop offset="0.62" stopColor="#3a4460" />
          <stop offset="0.85" stopColor="#8fa0d8" />
          <stop offset="1" stopColor="#2340a0" />
        </radialGradient>
      </defs>
      <g transform="scale(0.44643 0.33333)">
        <rect x="73" y="289" width="1403" height="59" fill="url(#band)" />
        <g fill="none" stroke="#a37a1c" strokeWidth="1.4" opacity="0.3">
          {Array.from({ length: 12 }, (_, i) => (
            <path
              key={i}
              d={`M${75 + i * 4} ${345 - i * 4} C 160 ${150 - i * 2}, 320 ${20 + i * 5}, 420 ${80 + i * 8} S 560 ${250 + i * 5}, 690 ${268 + i * 4} S 850 ${240 - i * 5}, 940 ${240 + i * 2} S 1020 330, 1100 ${345 - i * 2}`}
            />
          ))}
        </g>
        <path d="M430 90 L520 180 Q600 270 700 270 L800 345 L560 345 Z" fill="#c08c1c" opacity="0.14" />
        {LOGO_LAND.map((p, i) => (
          <polygon key={i} points={p} fill="url(#stripes)" />
        ))}
        <path d="M526 160 H593" stroke="#111" strokeWidth="5" />
        <ellipse cx="286" cy="180" rx="50" ry="82" fill="url(#globe)" />
        <path d="M262 120 Q295 90 335 104 Q345 130 310 135 Q275 140 262 120Z" fill="#4b5a86" />
        <path d="M312 140 Q345 180 325 225 Q305 262 262 256 Q310 238 312 140Z" fill="#4d4f66" />
        <path d="M245 180 Q240 120 275 102 Q250 150 256 235 Q245 220 245 180Z" fill="#a9b9ea" />
        <path d="M272 150 h40 v58 h-40z M292 145 v70 M268 180 h50" fill="#d99a3a" stroke="#3c2a14" strokeWidth="4" />
        <g fill="none" stroke="#1f2c14" strokeWidth="2.6">
          <ellipse cx="282" cy="180" rx="104" ry="26" />
          <ellipse cx="290" cy="180" rx="26" ry="132" transform="rotate(20 290 180)" />
          <ellipse cx="286" cy="172" rx="26" ry="122" transform="rotate(-26 286 172)" />
          <path d="M292 98 V262" />
        </g>
        <g fill="#0a0a0a">
          <path d="M131 210 L154 200 V304 Q154 322 163 316 L170 308 V196 L184 190 V300 Q180 340 150 344 Q131 346 131 318Z" />
          <path d="M176 322 V192 L193 184 L203 236 V178 L221 170 V294 L204 304 L194 258 V314Z" />
          <path d="M222 170 L240 160 V276 L222 288Z" />
        </g>
      </g>
      <g className="font-['Liberation_Sans',Arial,sans-serif]">
        <text x="185" y="52" fontSize="33" textLength="55" lengthAdjust="spacingAndGlyphs" className="fill-[#0d0d0d] font-bold">UNI</text>
        <text x="242" y="52" fontSize="33" textLength="53" lengthAdjust="spacingAndGlyphs" className="fill-[#0d0d0d]">GIS</text>
        <text x="301" y="36" fontSize="9.5" textLength="80" lengthAdjust="spacingAndGlyphs" className="fill-[#33290b] font-bold">the global virtual and</text>
        <text x="301" y="44" fontSize="9.5" textLength="78" lengthAdjust="spacingAndGlyphs" className="fill-[#33290b] font-bold">multilingual network</text>
        <text x="301" y="52" fontSize="9.5" textLength="48" lengthAdjust="spacingAndGlyphs" className="fill-[#33290b] font-bold">of GIScience</text>
      </g>
      <text x="442" y="110" fontSize="12.5" textLength="213" lengthAdjust="spacingAndGlyphs" className="fill-[#1c1c1c] font-['Open_Sans',sans-serif] italic">
        Educating GIS Professionals Worldwide
      </text>
    </svg>
  );
}

function Magnifier({ color, className }: { color: string; className: string }) {
  return (
    <svg viewBox="0 0 28 32" className={className} fill="none" stroke={color}>
      <circle cx="10.5" cy="10.5" r="8" strokeWidth="3.4" />
      <path d="M15.5 17.5 L24.5 29" strokeWidth="5" strokeLinecap="round" />
    </svg>
  );
}

/* ---------- page content ---------- */

function A({ children }: { children: React.ReactNode }) {
  return <a className="text-[#0b71b9]">{children}</a>;
}

type Item = { text?: string; link: string; plain?: boolean };
type Topic = { title: string; intro?: string; items: Item[]; widths: string; left: string; right: string };

const ROW_ONE: Topic[] = [
  {
    title: "GIS Introduction",
    widths: "grid-cols-[217px_438px] gap-x-[25px] w-[702px]",
    left: "bg-[#cf8551]",
    right: "bg-[#9ab3ce]",
    items: [{ link: "Understanding map projections >" }, { link: "Calculate Elevation profile >" }],
  },
  {
    title: "Data modelling & data structures",
    widths: "grid-cols-[284px_567px] gap-x-[29px] w-[936px]",
    left: "bg-black",
    right: "bg-[#cadefc]",
    items: [{ link: "Cultivating fields, but manipulating objects >" }],
  },
  {
    title: "Data sources & acquisition",
    widths: "grid-cols-[218px_438px] gap-x-[24px] w-[702px]",
    left: "bg-[#e93325]",
    right: "bg-[#948a8b]",
    intro: "Example of web services",
    items: [{ link: "World's largest urban areas>" }, { link: "Other Esri services (ArcGIS Online subscription\nrequired) >" }],
  },
];

const ROW_TWO: Topic[] = [
  {
    title: "Geographical Analysis",
    widths: "grid-cols-[218px_438px] gap-x-[24px] w-[702px]",
    left: "bg-[#d2b268]",
    right: "bg-[#84a69a]",
    items: [
      { link: "Introduction to geospatial analysis >" },
      { link: "Distance operators - online geoprocessing >" },
      { link: "Distance analysis >" },
      { link: "Map Algebra >", plain: true },
    ],
  },
  {
    title: "OpenGIS",
    widths: "grid-cols-[284px_567px] gap-x-[29px] w-[936px]",
    left: "bg-[#809f97]",
    right: "bg-[#f2ae86]",
    items: [
      { link: "Module Overview >" },
      { link: "Interact with OGC Web Map Service capabilities >" },
      { link: "Editing Land cover classes online >" },
    ],
  },
  {
    title: "Other apps",
    widths: "grid-cols-[218px_438px] gap-x-[24px] w-[702px]",
    left: "bg-[#809f97]",
    right: "bg-[#cfbbe5]",
    items: [{ text: "Niemals Alleine: ", link: "more >" }],
  },
];

function TopicCard({ topic }: { topic: Topic }) {
  return (
    <section className="shrink-0">
      <div className={`grid h-[100px] ${topic.widths}`}>
        <div className={topic.left} />
        <div className={topic.right} />
      </div>
      <h3 className="mt-[53px] text-[48px] leading-[64px] tracking-[1px] whitespace-nowrap text-[#323232] [-webkit-text-stroke:1.3px_#323232]">
        {topic.title}
      </h3>
      {topic.intro && <p className="mt-[25px] -mb-[3px] text-[28px] leading-[46px] tracking-[0.15px]">{topic.intro}</p>}
      <ul className="mt-[25px] text-[28px] leading-[46px] tracking-[0.15px]">
        {topic.items.map((it) => (
          <li key={it.link} className="flex pl-[49px]">
            <span className="mt-[20px] mr-[22px] h-[9px] w-[9px] shrink-0">
              {!it.plain && <span className="block h-[9px] w-[9px] rounded-full bg-[#323232]" />}
            </span>
            <span className="whitespace-pre">
              {it.text}
              <A>{it.link}</A>
            </span>
          </li>
        ))}
      </ul>
    </section>
  );
}

export default function App() {
  return (
    <div className="h-[2886px] w-[3226px] overflow-hidden bg-white font-['Liberation_Sans',Arial,sans-serif] text-[#323232]">
      <header className="relative z-20 flex h-[136px] items-start bg-[#fdbe26] pl-[472px] shadow-[0_1px_7px_rgba(0,0,0,0.5)]">
        <div className="mt-[17px]">
          <Logo />
        </div>
        <p className="mt-[48px] ml-[28px] font-['Lato',sans-serif] text-[38px] leading-[48px] tracking-[0.82px] whitespace-nowrap text-[#333] [-webkit-text-stroke:0.5px_#333]">
          Datasets and apps used to introduce GIS concepts and methods
        </p>
      </header>

      <nav className="relative z-10 flex h-[120px] items-start bg-white pl-[472px] font-['Lato',sans-serif] shadow-[0_1px_6px_rgba(0,0,0,0.55)]">
        <div className="mt-[21px] flex h-[78px] w-[911px] items-center justify-between rounded-[8px] border-2 border-[#dcdcdc] bg-white pr-[12px] pl-[23px] shadow-[0_0_12px_rgba(120,185,245,0.6)]">
          <span className="text-[37px] leading-[48px] tracking-[0.3px] whitespace-nowrap text-[#999] [-webkit-text-stroke:0.6px_#999]">Search for open data</span>
          <Magnifier color="#a3a3a3" className="h-[32px] w-[28px]" />
        </div>
        <span className="mt-[46px] ml-[38px] h-[28px] w-[29px] border-2 border-[#757575] bg-white" />
        <span className="mt-[44px] ml-[14px] w-[292px] text-[28px] leading-[36px] tracking-[0.1px] whitespace-nowrap text-[#6e6e6e] [-webkit-text-stroke:0.5px_#6e6e6e]">
          SEARCH WITHIN MAP
        </span>
        <button className="mt-[28px] ml-[787px] h-[68px] w-[192px] shrink-0 rounded-[8px] border-2 border-[#0079c1] bg-white pl-[2px] text-[23px] font-medium tracking-[2.3px] whitespace-nowrap text-[#0079c1]">
          My Activity
        </button>
      </nav>

      <div className="relative flex h-[606px] justify-start border-b-4 border-[#ececec] bg-[#cecdd2] pl-[587px]">
        <WorldMap />

        <div className="absolute top-[474px] left-[481px] flex h-[65px] w-[117px] overflow-hidden rounded-[8px] bg-[#ececec] shadow-[0_0_3px_1px_rgba(120,115,105,0.45)]">
          <div className="flex w-[58px] items-center justify-center border-r-2 border-[#4c4c4c]">
            <span className="h-[3px] w-[16px] bg-[#4c4c4c]" />
          </div>
          <div className="flex flex-1 items-center justify-center pb-[6px]">
            <svg width="20" height="20" viewBox="0 0 20 20" stroke="#4c4c4c" strokeWidth="3">
              <path d="M0 10 H20 M10 0 V20" />
            </svg>
          </div>
        </div>
        <div className="absolute top-[472px] left-[622px] flex h-[68px] w-[68px] items-center justify-center rounded-[8px] bg-[#ececec] pt-[6px] shadow-[0_0_3px_1px_rgba(120,115,105,0.45)]">
          <Magnifier color="#4c4c4c" className="h-[29px] w-[26px]" />
        </div>

        <div className="absolute top-[562px] left-[477px] h-[30px] w-[2304px] overflow-hidden bg-white/50 pl-[6px] text-[26px] leading-[30px] whitespace-nowrap text-[#4c4c4c]/80">
          Content may not reflect National Geographic's current map policy. Sources: National Geographic, Esri, DeLorme, HERE, UNEP-WCMC, USGS, NASA, ESA, METI, NRCAN, GEBCO
        </div>
        <div className="absolute top-[542px] left-[2533px] flex h-[64px] w-[242px] items-start border-2 border-b-0 border-[#e4e4e6] bg-[#ebebeb]">
          <span className="mt-[24px] ml-[18px] h-[16px] w-[46px] bg-[#f0f0f0] shadow-[0_0_4px_2px_rgba(0,0,0,0.18)]" />
          <span className="mt-[16px] ml-[28px] h-[30px] w-[50px] border-2 border-[#0079c1] bg-white shadow-[0_0_4px_1px_rgba(0,0,0,0.2)]" />
          <span className="mt-[12px] ml-[28px] h-[38px] w-[47px] bg-[#f0f0f0] shadow-[0_0_4px_2px_rgba(0,0,0,0.18)]" />
        </div>
      </div>

      <main className="h-[1972px] pt-[112px] pl-[445px]">
        <h1 className="text-[60px] leading-[70px] tracking-[1.52px] whitespace-nowrap [-webkit-text-stroke:1.6px_#323232]">
          Activities dedicated to introducing GIS concepts, methods and tools
        </h1>
        <div className="mt-[32px] flex flex-col gap-[23px] text-[28px] leading-[46px] tracking-[0.15px] whitespace-nowrap">
          <p>
            In the sections presented below you can can find a list of activities developed by UNIGIS module's authors and instructors using web technologies. Please feel free to try them out and to
            <br />
            send feedback to <A>UNIGIS Salzburg</A>.
          </p>
          <p>
            A centralized overview of the available applications developed to introduced various GIS concepts, methods or tools can be found <A>here</A>. We invite you to contribute to designing attractive
            <br />
            applications and to sharing them with us. Most of the shared applications have been developed using the Esri <A>Story Map Journal</A> template.
          </p>
          <p>
            Furthemore, if you want to share your data on UIA ArcGIS Online, please use <A>this dictionary</A> for defining keywords for published resources. The utilization of well-defined keywords allow
            <br />
            users to easily search and retrieve your online items.
          </p>
        </div>
        <div className="mt-[142px] flex h-[624px] items-start">
          {ROW_ONE.map((t) => (
            <TopicCard key={t.title} topic={t} />
          ))}
        </div>
        <div className="flex items-start">
          {ROW_TWO.map((t) => (
            <TopicCard key={t.title} topic={t} />
          ))}
        </div>
      </main>

      <footer className="flex h-[52px] overflow-hidden bg-[#7ba69a] pt-[44px] pl-[445px] text-[24px] leading-[32px] whitespace-nowrap">
        <span className="w-[1601px]">
          <A>Terms of use</A>
        </span>
        <span className="tracking-[1.1px]">
          © 2015 UNIGIS GIS Online | <A>Disclaimer</A> | <A>UNIGIS Contact</A>
        </span>
      </footer>
    </div>
  );
}
